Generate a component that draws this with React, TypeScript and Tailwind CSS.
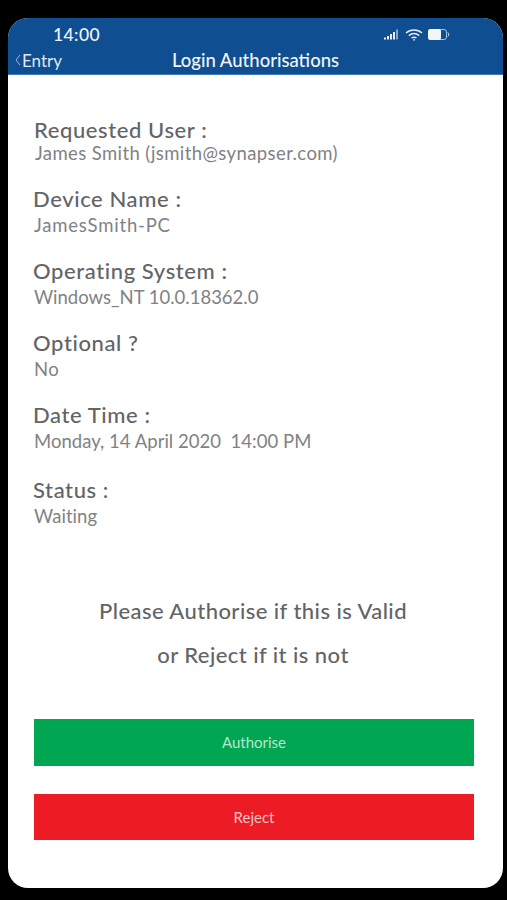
const details = [
  { label: "Requested User :", value: "James Smith (jsmith@synapser.com)", className: "pl-[26px]", valueClassName: "mt-[-1px] tracking-[0.4px]" },
  { label: "Device Name :", value: "JamesSmith-PC", className: "mt-[22px] pl-[25px]", valueClassName: "mt-[2px] tracking-[0.8px]" },
  { label: "Operating System :", value: "Windows_NT 10.0.18362.0", className: "mt-[22px] pl-[25px]", valueClassName: "mt-[2px] tracking-[0px]" },
  { label: "Optional ?", value: "No", className: "mt-[22px] pl-[25px]", valueClassName: "mt-[2px] tracking-[0.35px]" },
  { label: "Date Time :", value: "Monday, 14 April 2020  14:00 PM", className: "mt-[22px] pl-[25px]", valueClassName: "mt-[2px] tracking-[0.03px]" },
  { label: "Status :", value: "Waiting", className: "mt-[25px] pl-[25px]", valueClassName: "mt-[2px] tracking-[0.05px]" },
];

function SignalIcon() {
  return (
    <svg width="16" height="11" viewBox="0 0 16 11" fill="#e8eef5">
      <rect x="0" y="8.5" width="2" height="2" />
      <rect x="3" y="7" width="2" height="3.5" />
      <rect x="6" y="5" width="2" height="5.5" />
      <rect x="9" y="3" width="2" height="7.5" />
      <rect x="12" y="0.5" width="2" height="10" opacity="0.55" />
    </svg>
  );
}

function WifiIcon() {
  return (
    <svg width="18" height="12" viewBox="0 0 18 12" fill="none" stroke="#e8eef5" strokeWidth="1.4">
      <path d="M1 4 C5.5 0 12.5 0 17 4" />
      <path d="M3.8 6.6 C7 4 11 4 14.2 6.6" />
      <path d="M6.5 9 C8 8 10 8 11.5 9" />
      <circle cx="9" cy="10.8" r="0.9" fill="#e8eef5" stroke="none" />
    </svg>
  );
}

function BatteryIcon() {
  return (
    <svg width="22" height="11" viewBox="0 0 22 11">
      <rect x="0.5" y="0.5" width="18" height="10" rx="2.5" fill="none" stroke="#e8eef5" strokeWidth="1" opacity="0.7" />
      <rect x="0" y="0" width="13" height="11" rx="2.5" fill="#f4f7fa" />
      <path d="M19.8 3.5 C21 4 21 7 19.8 7.5" fill="none" stroke="#e8eef5" strokeWidth="1" />
    </svg>
  );
}

export default function App() {
  return (
    <div className="h-[900px] w-[507px] overflow-hidden bg-black pt-[18px] pl-[8px] font-['Lato',sans-serif]">
      <div className="flex h-[870px] w-[495px] flex-col overflow-hidden rounded-[20px] bg-white">
        <header className="h-[57px] shrink-0 border-b border-[#3f7ab5] bg-[#0f4e90] text-white">
          <div className="flex h-[28px] items-center justify-between pt-[5px] pr-[53px] pl-[45px]">
            <span className="text-[17.5px] leading-none font-medium tracking-[0.4px] text-[#f0f4f8]">14:00</span>
            <div className="flex items-center gap-[5px]">
              <SignalIcon />
              <WifiIcon />
              <BatteryIcon />
            </div>
          </div>
          <div className="relative flex h-[28px] items-center justify-center">
            <div className="absolute left-[7px] flex items-center gap-[1px] text-[#dfe8f1]">
              <svg width="6" height="12" viewBox="0 0 6 12" fill="none" stroke="#9db9d6" strokeWidth="1">
                <path d="M5 1 L1 6 L5 11" />
              </svg>
              <span className="text-[17px] leading-none">Entry</span>
            </div>
            <h1 className="text-[18.5px] leading-none font-medium text-[#f2f5f9]">Login Authorisations</h1>
          </div>
        </header>

        <main className="flex flex-1 flex-col">
          <div className="pt-[42px]">
            {details.map((d) => (
              <div key={d.label} className={d.className}>
                <div className="text-[22px] leading-[26px] font-medium tracking-[0.6px] text-[#626466]">{d.label}</div>
                <div className={`${d.valueClassName} ml-[1px] text-[18.5px] leading-[22px] whitespace-pre text-[#808284]`}>
                  {d.value}
                </div>
              </div>
            ))}
          </div>

          <div className="mt-[71px] text-center text-[22px] leading-[26px] font-medium tracking-[0.45px] text-[#626466]">
            <p className="pr-[5px]">Please Authorise if this is Valid</p>
            <p className="mt-[18px] pr-[5px]">or Reject if it is not</p>
          </div>

          <div className="mt-[51px] flex flex-col gap-[28px] pr-[29px] pl-[26px]">
            <button className="h-[47px] bg-[#00a651] text-[15px] text-[#b5e8cc]">Authorise</button>
            <button className="h-[46px] bg-[#ed1c24] text-[15px] text-[#fcc5c8]">Reject</button>
          </div>
        </main>
      </div>
    </div>
  );
}
